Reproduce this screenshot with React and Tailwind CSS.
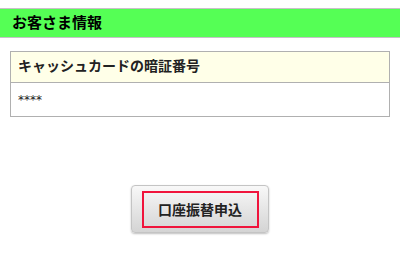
export default function App() {
  return (
    <div className="w-[400px] h-[257px] bg-white pt-2 font-['Liberation_Serif','Noto_Sans_CJK_JP',serif]">
      {/* Header */}
      <div className="border-y border-[#c8c0c8] bg-[#55ff55] h-[30px] flex items-center px-3">
        <h1 className="text-[15px] font-bold text-black leading-none">お客さま情報</h1>
      </div>

      {/* Info table */}
      <div className="mx-[10px] mt-[13px] border border-[#b0b0b0]">
        <div className="bg-[#ffffe8] h-[31px] flex items-center px-[7px] border-b border-[#b0b0b0]">
          <span className="text-[14px] font-bold text-[#222] leading-none">キャッシュカードの暗証番号</span>
        </div>
        <div className="h-[33px] flex items-center px-[7px]">
          <span className="text-[12px] text-[#222] leading-none font-['DejaVu_Sans',sans-serif]">****</span>
        </div>
      </div>

      {/* Button */}
      <div className="flex justify-center mt-[68px]">
        <button className="w-[138px] h-[48px] rounded-[4px] border border-[#c4c4c4] bg-gradient-to-b from-[#f8f8f8] to-[#d4d4d4] shadow-[0_1px_2px_rgba(0,0,0,0.25)] flex items-center justify-center">
          <span className="w-[117px] h-[37px] border-2 border-[#f0143c] flex items-center justify-center text-[14px] font-bold text-[#222] font-['Noto_Sans_CJK_JP',sans-serif]">
            口座振替申込
          </span>
        </button>
      </div>
    </div>
  );
}
